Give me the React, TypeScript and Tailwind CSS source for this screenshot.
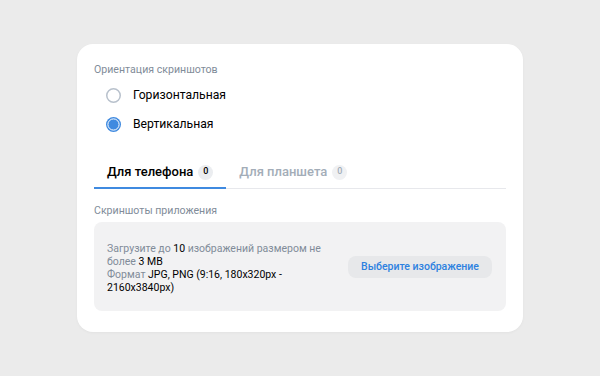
import React from 'react';

const Radio: React.FC<{ checked?: boolean; label: string }> = ({ checked, label }) => {
    return (
        <label className="flex h-[29px] items-center gap-[12px] pl-[12px]">
            {checked ? (
                <svg width="15" height="15" viewBox="0 0 15 15">
                    <circle cx="7.5" cy="7.5" r="7.5" fill="#3f8ae0" />
                    <circle cx="7.5" cy="7.5" r="5.6" fill="none" stroke="#ffffff" strokeWidth="1" />
                </svg>
            ) : (
                <svg width="15" height="15" viewBox="0 0 15 15">
                    <circle cx="7.5" cy="7.5" r="6.75" fill="none" stroke="#b8c1cc" strokeWidth="1.5" />
                </svg>
            )}
            <span className="text-[12.2px] text-black">{label}</span>
        </label>
    );
};

const Tab: React.FC<{ active?: boolean; label: string; count: number }> = ({ active, label, count }) => {
    return (
        <div
            className={
                active
                    ? 'flex h-[34px] items-center gap-[5px] border-b-2 border-[#3f8ae0] px-[13px] pt-[2px]'
                    : 'flex h-[34px] items-center gap-[5px] border-b-2 border-transparent px-[13px] pt-[2px]'
            }
        >
            <span className={active ? 'text-[13px] font-medium text-black' : 'text-[13px] font-medium text-[#a3adb8]'}>
                {label}
            </span>
            <span
                className={
                    active
                        ? 'flex h-[15px] w-[15px] items-center justify-center rounded-full bg-[#ebedf0] text-[9px] font-medium text-black'
                        : 'flex h-[15px] w-[15px] items-center justify-center rounded-full bg-[#f0f1f3] text-[9px] font-medium text-[#a3adb8]'
                }
            >
                {count}
            </span>
        </div>
    );
};

export default function App() {
    return (
        <div
            className="flex h-[376px] w-[600px] items-start justify-center bg-[#ebebeb] pt-[44px]"
            style={{ fontFamily: 'Roboto, "Liberation Sans", sans-serif' }}
        >
            <div className="w-[446px] rounded-[16px] bg-white px-[17px] pb-[21px] pt-[19px] shadow-[0_1px_3px_rgba(0,0,0,0.04)]">
                {/* Orientation */}
                <div className="text-[10.6px] leading-[14px] text-[#818c99]">Ориентация скриншотов</div>
                <div className="mt-[4px] flex flex-col">
                    <Radio label="Горизонтальная" />
                    <Radio checked label="Вертикальная" />
                </div>

                {/* Tabs */}
                <div className="mt-[16px] flex border-b border-[#e7e8ec]">
                    <div className="-mb-px flex">
                        <Tab active label="Для телефона" count={0} />
                        <Tab label="Для планшета" count={0} />
                    </div>
                </div>

                {/* Upload */}
                <div className="mt-[15px] text-[10.6px] leading-[14px] text-[#818c99]">Скриншоты приложения</div>
                <div className="mt-[4px] flex h-[89px] items-center justify-between rounded-[8px] bg-[#f2f2f3] pl-[13px] pr-[14px]">
                    <div className="w-[222px] pt-[2px] text-[10.5px] leading-[13px] text-[#818c99]">
                        Загрузите до <span className="text-black">10</span> изображений размером не более{' '}
                        <span className="text-black">3 MB</span>
                        <br />
                        Формат <span className="text-black">JPG, PNG (9:16, 180x320px - 2160x3840px)</span>
                    </div>
                    <button className="h-[22px] w-[144px] rounded-[8px] bg-[#e7e8ea] text-[10.5px] font-medium text-[#2d81e0]">
                        Выберите изображение
                    </button>
                </div>
            </div>
        </div>
    );
}
